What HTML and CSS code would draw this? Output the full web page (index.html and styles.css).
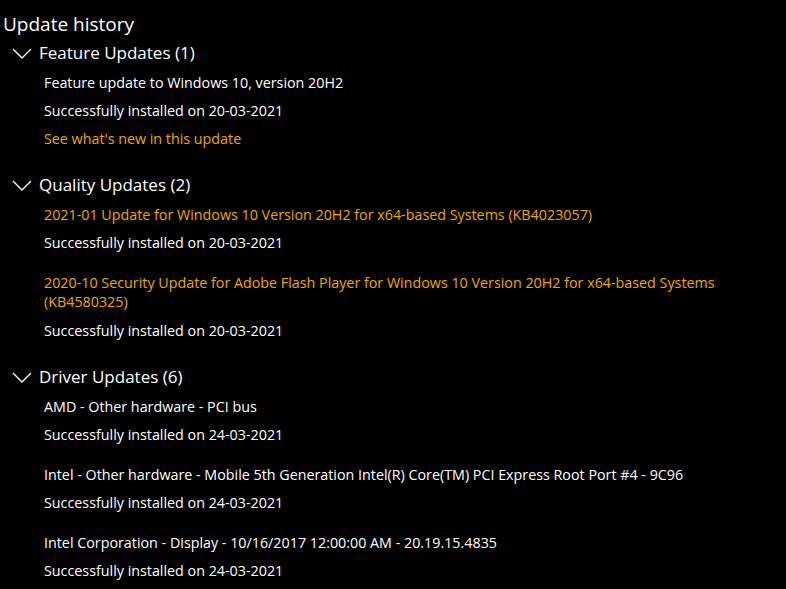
FILE: index.html
```html
<!DOCTYPE html>
<html>
<head>
<meta charset="utf-8">
<link rel="stylesheet" href="styles.css">
</head>
<body>
<div class="page">
  <h1 class="title">Update history</h1>

  <section class="group">
    <div class="group-head">
      <svg class="chev" viewBox="0 0 20 11" width="20" height="11"><path d="M1 1 L10 10 L19 1" fill="none" stroke="#fff" stroke-width="1.4"/></svg>
      <span>Feature Updates (1)</span>
    </div>
    <div class="item">
      <div class="line">Feature update to Windows 10, version 20H2</div>
      <div class="line">Successfully installed on 20-03-2021</div>
      <div class="line link">See what's new in this update</div>
    </div>
  </section>

  <section class="group">
    <div class="group-head">
      <svg class="chev" viewBox="0 0 20 11" width="20" height="11"><path d="M1 1 L10 10 L19 1" fill="none" stroke="#fff" stroke-width="1.4"/></svg>
      <span>Quality Updates (2)</span>
    </div>
    <div class="item">
      <div class="line link">2021-01 Update for Windows 10 Version 20H2 for x64-based Systems (KB4023057)</div>
      <div class="line">Successfully installed on 20-03-2021</div>
    </div>
    <div class="item">
      <div class="line link wrap">2020-10 Security Update for Adobe Flash Player for Windows 10 Version 20H2 for x64-based Systems (KB4580325)</div>
      <div class="line">Successfully installed on 20-03-2021</div>
    </div>
  </section>

  <section class="group">
    <div class="group-head">
      <svg class="chev" viewBox="0 0 20 11" width="20" height="11"><path d="M1 1 L10 10 L19 1" fill="none" stroke="#fff" stroke-width="1.4"/></svg>
      <span>Driver Updates (6)</span>
    </div>
    <div class="item">
      <div class="line">AMD - Other hardware - PCI bus</div>
      <div class="line">Successfully installed on 24-03-2021</div>
    </div>
    <div class="item">
      <div class="line">Intel - Other hardware - Mobile 5th Generation Intel(R) Core(TM) PCI Express Root Port #4 - 9C96</div>
      <div class="line">Successfully installed on 24-03-2021</div>
    </div>
    <div class="item">
      <div class="line">Intel Corporation - Display - 10/16/2017 12:00:00 AM - 20.19.15.4835</div>
      <div class="line">Successfully installed on 24-03-2021</div>
    </div>
  </section>
</div>
</body>
</html>
```

FILE: styles.css
```css
html, body {
  margin: 0;
  padding: 0;
  background: #000;
  color: #fff;
  font-family: "Open Sans", "Noto Sans", sans-serif;
  overflow: hidden;
}
.page {
  width: 786px;
  height: 589px;
  padding: 10px 0 0 3px;
  box-sizing: border-box;
}
.title {
  margin: 0;
  font-size: 19px;
  font-weight: 400;
  line-height: 28px;
}
.group {
  display: flex;
  flex-direction: column;
}
.group + .group {
  margin-top: 17px;
}
.group-head {
  display: flex;
  align-items: center;
  height: 29px;
  padding-bottom: 2px;
  font-size: 17px;
  padding-left: 9px;
}
.chev {
  display: block;
  margin-right: 7px;
  margin-top: 2px;
}
.item {
  padding-left: 41px;
  font-size: 14.3px;
  display: flex;
  flex-direction: column;
}
.item + .item {
  margin-top: 12px;
}
.line {
  line-height: 28px;
}
.line.wrap {
  line-height: 19px;
  padding: 4px 0 6px;
  max-width: 700px;
}
.link {
  color: #eda800;
}
```
